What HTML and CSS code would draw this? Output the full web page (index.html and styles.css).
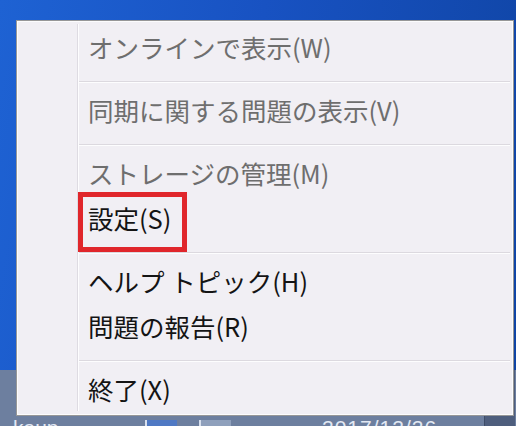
FILE: index.html
```html
<!DOCTYPE html>
<html lang="ja">
<head>
  <meta charset="UTF-8" />
  <meta name="viewport" content="width=device-width, initial-scale=1.0" />
  <title>OneDrive メニュー</title>
  <link rel="stylesheet" href="styles.css">
</head>
<body>
  <div class="screen">
    <div class="desktop"></div>
    <div class="taskbar">
      <span class="tb-user">kaup</span>
      <span class="tb-icon"></span>
      <span class="tb-icon tb-icon-light"></span>
      <span class="tb-clock">2017/12/26</span>
      <span class="tb-show"></span>
    </div>

    <div class="menu">
      <div class="gutter"></div>
      <ul class="items">
        <li class="item disabled">オンラインで表示(W)</li>
        <li class="sep"></li>
        <li class="item disabled">同期に関する問題の表示(V)</li>
        <li class="sep"></li>
        <li class="item disabled">ストレージの管理(M)</li>
        <li class="item marked">設定(S)<span class="mark"></span></li>
        <li class="sep"></li>
        <li class="item">ヘルプ トピック(H)</li>
        <li class="item">問題の報告(R)</li>
        <li class="sep"></li>
        <li class="item">終了(X)</li>
      </ul>
    </div>
  </div>
</body>
</html>
```

FILE: styles.css
```css
html, body {
  margin: 0;
  padding: 0;
}
body {
  width: 516px;
  height: 426px;
  overflow: hidden;
  font-family: "Noto Sans CJK JP", "Noto Sans", sans-serif;
}
.screen {
  position: relative;
  height: 426px;
  display: flex;
  flex-direction: column;
  background: linear-gradient(100deg, #1e62d3 0%, #1852c2 45%, #0f44a3 100%);
}
.desktop {
  flex: 1;
}

/* taskbar (mostly hidden under the menu) */
.taskbar {
  height: 56px;
  box-sizing: border-box;
  padding-top: 47px;
  display: flex;
  align-items: flex-start;
  background: #6d7f9f;
  color: #e3e9f3;
  font-family: "Liberation Sans", Arial, sans-serif;
  font-size: 21px;
  line-height: 22px;
  overflow: hidden;
}
.tb-user {
  margin-left: 13px;
  width: 132px;
}
.tb-icon {
  width: 30px;
  height: 12px;
  margin-top: 3px;
  background: #4f79c4;
  border-left: 2px solid #d8e0ee;
}
.tb-icon-light {
  margin-left: 22px;
  background: #8fa0bc;
}
.tb-clock {
  margin-left: 91px;
  width: 162px;
  letter-spacing: 1px;
}
.tb-show {
  align-self: stretch;
  margin-top: -47px;
  width: 30px;
  background: #4e5e7d;
  border-left: 1px solid #3d4c68;
}

/* context menu */
.menu {
  position: absolute;
  left: 16px;
  top: 20px;
  width: 498px;
  box-sizing: border-box;
  display: flex;
  padding: 3px 3px 4px;
  background: #f1eff4;
  border: 1px solid #979797;
  box-shadow: inset 0 0 0 1px #fcfcfd;
}
.gutter {
  width: 57px;
  flex: none;
  border-right: 1px solid #dedbe2;
  box-shadow: 1px 0 0 #fdfdfe;
}
.items {
  flex: 1;
  list-style: none;
  margin: 0 0 0 1px;
  padding: 0;
}
.item {
  position: relative;
  height: 45px;
  line-height: 45px;
  padding-left: 9px;
  font-size: 25.5px;
  color: #141414;
  white-space: nowrap;
}
.item.disabled {
  color: #6e6e6e;
}
.sep {
  margin: 12px 0 4px;
  height: 1px;
  background: #dcd9df;
  border-bottom: 1px solid #fdfdfe;
}

/* red annotation box */
.mark {
  position: absolute;
  left: -1px;
  top: -3px;
  width: 109px;
  height: 60px;
  box-sizing: border-box;
  border: 5px solid #e0262b;
}
```
